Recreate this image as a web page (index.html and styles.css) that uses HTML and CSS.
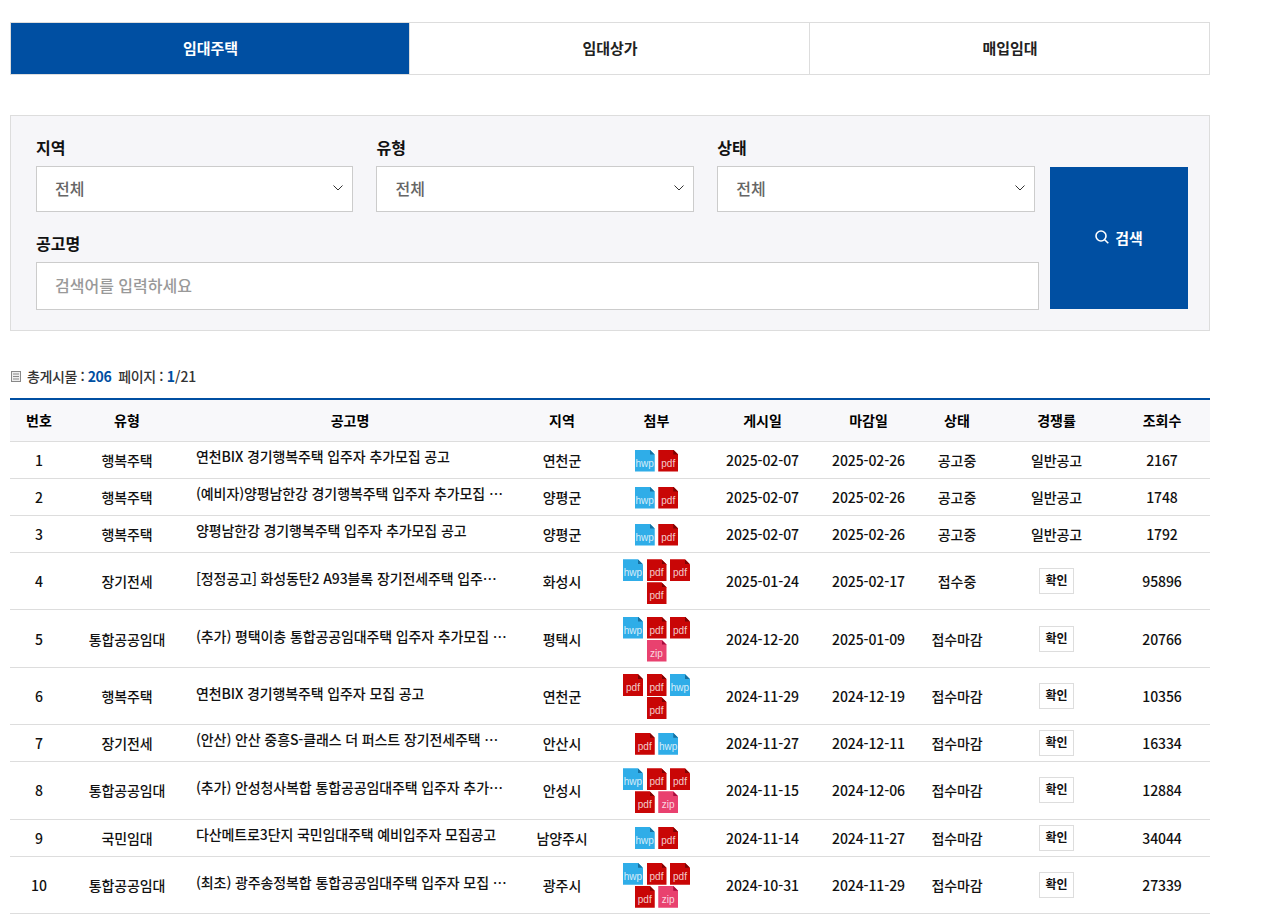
FILE: index.html

```html
<!DOCTYPE html>
<html lang="ko">
<head>
  <meta charset="UTF-8" />
  <title>공고문</title>
  <link rel="stylesheet" href="styles.css">
</head>
<body>
  <div class="wrap">
    <div class="tabs">
      <a class="tab active">임대주택</a>
      <a class="tab">임대상가</a>
      <a class="tab">매입임대</a>
    </div>

    <div class="search">
      <div class="fields">
        <div class="selects">
          <div class="field">
            <label>지역</label>
            <div class="select"><span>전체</span><svg width="10" height="6" viewBox="0 0 10 6"><path d="M.5.5 5 5 9.5.5" fill="none" stroke="#333" stroke-width="1"/></svg></div>
          </div>
          <div class="field">
            <label>유형</label>
            <div class="select"><span>전체</span><svg width="10" height="6" viewBox="0 0 10 6"><path d="M.5.5 5 5 9.5.5" fill="none" stroke="#333" stroke-width="1"/></svg></div>
          </div>
          <div class="field">
            <label>상태</label>
            <div class="select"><span>전체</span><svg width="10" height="6" viewBox="0 0 10 6"><path d="M.5.5 5 5 9.5.5" fill="none" stroke="#333" stroke-width="1"/></svg></div>
          </div>
        </div>
        <div class="field">
          <label>공고명</label>
          <input class="keyword" type="text" placeholder="검색어를 입력하세요">
        </div>
      </div>
      <button class="search-btn">
        <svg width="14" height="14" viewBox="0 0 14 14"><circle cx="6" cy="6" r="5" fill="none" stroke="#fff" stroke-width="1.6"/><path d="M9.7 9.7 13.3 13.3" stroke="#fff" stroke-width="1.6"/></svg>
        검색
      </button>
    </div>

    <div class="summary">
      <svg width="10" height="11" viewBox="0 0 10 11"><rect x=".5" y=".5" width="9" height="10" fill="#eee" stroke="#888"/><path d="M2 3h6M2 5.500h6M2 8h6" stroke="#888"/></svg>
      <span>총게시물 : <b>206</b></span>
      <span>페이지 : <span class="pages"><b>1</b>/21</span></span>
    </div>

    <table class="list">
      <colgroup>
        <col class="c-no"><col class="c-type"><col class="c-title"><col class="c-area"><col class="c-file">
        <col class="c-date"><col class="c-date2"><col class="c-state"><col class="c-rate"><col class="c-view">
      </colgroup>
      <thead>
        <tr><th>번호</th><th>유형</th><th>공고명</th><th>지역</th><th>첨부</th><th>게시일</th><th>마감일</th><th>상태</th><th>경쟁률</th><th>조회수</th></tr>
      </thead>
      <tbody>
        <tr>
          <td>1</td><td>행복주택</td>
          <td class="title"><a>연천BIX 경기행복주택 입주자 추가모집 공고</a></td>
          <td>연천군</td>
          <td><div class="files"><i class="file hwp">hwp</i><i class="file pdf">pdf</i></div></td>
          <td>2025-02-07</td><td>2025-02-26</td><td>공고중</td><td>일반공고</td><td>2167</td>
        </tr>
        <tr>
          <td>2</td><td>행복주택</td>
          <td class="title"><a>(예비자)양평남한강 경기행복주택 입주자 추가모집 …</a></td>
          <td>양평군</td>
          <td><div class="files"><i class="file hwp">hwp</i><i class="file pdf">pdf</i></div></td>
          <td>2025-02-07</td><td>2025-02-26</td><td>공고중</td><td>일반공고</td><td>1748</td>
        </tr>
        <tr>
          <td>3</td><td>행복주택</td>
          <td class="title"><a>양평남한강 경기행복주택 입주자 추가모집 공고</a></td>
          <td>양평군</td>
          <td><div class="files"><i class="file hwp">hwp</i><i class="file pdf">pdf</i></div></td>
          <td>2025-02-07</td><td>2025-02-26</td><td>공고중</td><td>일반공고</td><td>1792</td>
        </tr>
        <tr class="tall">
          <td>4</td><td>장기전세</td>
          <td class="title"><a>[정정공고] 화성동탄2 A93블록 장기전세주택 입주…</a></td>
          <td>화성시</td>
          <td><div class="files"><i class="file hwp">hwp</i><i class="file pdf">pdf</i><i class="file pdf">pdf</i><i class="file pdf">pdf</i></div></td>
          <td>2025-01-24</td><td>2025-02-17</td><td>접수중</td><td><a class="check">확인</a></td><td>95896</td>
        </tr>
        <tr class="tall">
          <td>5</td><td>통합공공임대</td>
          <td class="title"><a>(추가) 평택이충 통합공공임대주택 입주자 추가모집 …</a></td>
          <td>평택시</td>
          <td><div class="files"><i class="file hwp">hwp</i><i class="file pdf">pdf</i><i class="file pdf">pdf</i><i class="file zip">zip</i></div></td>
          <td>2024-12-20</td><td>2025-01-09</td><td>접수마감</td><td><a class="check">확인</a></td><td>20766</td>
        </tr>
        <tr class="tall">
          <td>6</td><td>행복주택</td>
          <td class="title"><a>연천BIX 경기행복주택 입주자 모집 공고</a></td>
          <td>연천군</td>
          <td><div class="files"><i class="file pdf">pdf</i><i class="file pdf">pdf</i><i class="file hwp">hwp</i><i class="file pdf">pdf</i></div></td>
          <td>2024-11-29</td><td>2024-12-19</td><td>접수마감</td><td><a class="check">확인</a></td><td>10356</td>
        </tr>
        <tr>
          <td>7</td><td>장기전세</td>
          <td class="title"><a>(안산) 안산 중흥S-클래스 더 퍼스트 장기전세주택 …</a></td>
          <td>안산시</td>
          <td><div class="files"><i class="file pdf">pdf</i><i class="file hwp">hwp</i></div></td>
          <td>2024-11-27</td><td>2024-12-11</td><td>접수마감</td><td><a class="check">확인</a></td><td>16334</td>
        </tr>
        <tr class="tall">
          <td>8</td><td>통합공공임대</td>
          <td class="title"><a>(추가) 안성청사복합 통합공공임대주택 입주자 추가…</a></td>
          <td>안성시</td>
          <td><div class="files"><i class="file hwp">hwp</i><i class="file pdf">pdf</i><i class="file pdf">pdf</i><i class="file pdf">pdf</i><i class="file zip">zip</i></div></td>
          <td>2024-11-15</td><td>2024-12-06</td><td>접수마감</td><td><a class="check">확인</a></td><td>12884</td>
        </tr>
        <tr>
          <td>9</td><td>국민임대</td>
          <td class="title"><a>다산메트로3단지 국민임대주택 예비입주자 모집공고</a></td>
          <td>남양주시</td>
          <td><div class="files"><i class="file hwp">hwp</i><i class="file pdf">pdf</i></div></td>
          <td>2024-11-14</td><td>2024-11-27</td><td>접수마감</td><td><a class="check">확인</a></td><td>34044</td>
        </tr>
        <tr class="tall">
          <td>10</td><td>통합공공임대</td>
          <td class="title"><a>(최초) 광주송정복합 통합공공임대주택 입주자 모집 …</a></td>
          <td>광주시</td>
          <td><div class="files"><i class="file hwp">hwp</i><i class="file pdf">pdf</i><i class="file pdf">pdf</i><i class="file pdf">pdf</i><i class="file zip">zip</i></div></td>
          <td>2024-10-31</td><td>2024-11-29</td><td>접수마감</td><td><a class="check">확인</a></td><td>27339</td>
        </tr>
      </tbody>
    </table>
  </div>
</body>
</html>
```

FILE: styles.css

```css
* {
  box-sizing: border-box;
}
body {
  margin: 0;
  background-color: #fff;
  font-family: "Noto Sans CJK KR", "Noto Sans", sans-serif;
  font-size: 14px;
  color: #000;
}
.wrap {
  width: 1200px;
  margin-left: 10px;
  padding-top: 22px;
}

/* tabs */
.tabs {
  display: flex;
  height: 53px;
  border: 1px solid #ddd;
}
.tab {
  flex: 1;
  display: flex;
  align-items: center;
  justify-content: center;
  padding: 0 0 2px 1px;
  font-size: 15px;
  font-weight: 700;
  color: #222;
  border-left: 1px solid #ddd;
}
.tab:first-child {
  flex: 0 0 398px;
  border-left: none;
}
.tab.active {
  background-color: #004fa2;
  color: #fff;
}

/* search box */
.search {
  display: flex;
  align-items: flex-end;
  gap: 11px;
  height: 216px;
  margin-top: 40px;
  padding: 18px 21px 20px 25px;
  background-color: #f6f6f9;
  border: 1px solid #ddd;
}
.fields {
  flex: 1;
  display: flex;
  flex-direction: column;
  gap: 19px;
}
.selects {
  display: flex;
  gap: 23px;
  padding-right: 4px;
}
.selects .field {
  flex: 1;
}
.selects .field:first-child {
  flex: 0 0 317.45px;
}
.field label {
  display: block;
  height: 24px;
  margin-bottom: 7px;
  font-size: 16px;
  font-weight: 700;
  line-height: 24px;
  color: #111;
}
.select {
  display: flex;
  align-items: center;
  justify-content: space-between;
  height: 46px;
  padding: 0 9px 2px 18px;
  background-color: #fff;
  border: 1px solid #ccc;
  font-size: 16px;
  font-weight: 500;
  color: #666;
}
.keyword {
  display: block;
  width: 100%;
  height: 48px;
  padding: 0 18px 2px;
  background-color: #fff;
  border: 1px solid #ccc;
  border-radius: 0;
  font-family: inherit;
  font-size: 16px;
  font-weight: 500;
}
.keyword::placeholder {
  color: #999;
}
.search-btn {
  display: flex;
  align-items: center;
  justify-content: center;
  gap: 6px;
  width: 138px;
  height: 142px;
  margin-bottom: 1px;
  padding: 0 0 2px;
  background-color: #004fa2;
  border: none;
  font-family: inherit;
  font-size: 15px;
  font-weight: 700;
  color: #fff;
}

/* summary line */
.summary {
  display: flex;
  align-items: center;
  gap: 6px;
  height: 20px;
  margin-top: 35px;
  padding-left: 1px;
  font-size: 14px;
  font-weight: 500;
  letter-spacing: -0.4px;
  color: #333;
}
.summary span + span {
  margin-left: 1px;
}
.summary b {
  color: #004fa2;
}
.summary .pages {
  letter-spacing: 0;
}

/* list table */
.list {
  width: 100%;
  margin-top: 12px;
  table-layout: fixed;
  border-collapse: separate;
  border-spacing: 0;
  border-top: 2px solid #004fa2;
}
.c-no { width: 58px; }
.c-type { width: 118px; }
.c-title { width: 328px; }
.c-area { width: 96px; }
.c-file { width: 93px; }
.c-date { width: 119px; }
.c-date2 { width: 93px; }
.c-state { width: 84px; }
.c-rate { width: 115px; }
.c-view { width: 96px; }
.list th {
  height: 42px;
  padding-bottom: 2px;
  background-color: #f8f8fa;
  border-bottom: 1px solid #ddd;
  font-size: 14px;
  font-weight: 700;
  text-align: center;
}
.list td {
  height: 37px;
  padding: 0;
  border-bottom: 1px solid #ddd;
  font-weight: 500;
  letter-spacing: -0.1px;
  text-align: center;
  color: #111;
}
.list tr.tall td {
  height: 57.4px;
}
.list td.title {
  padding: 0 10px 8px;
  letter-spacing: -0.12px;
  text-align: left;
}
.list tr.tall td.title {
  padding-bottom: 6px;
}
.title a {
  display: block;
  white-space: nowrap;
}

/* attachment icons */
.files {
  display: flex;
  flex-wrap: wrap;
  justify-content: center;
  gap: 1px 3.5px;
  width: 68px;
  margin: 1px auto 0;
}
.file {
  position: relative;
  display: block;
  width: 20px;
  height: 22px;
  padding-top: 6px;
  clip-path: polygon(0 0, 15px 0, 100% 5px, 100% 100%, 0 100%);
  font-family: "Liberation Sans", sans-serif;
  font-size: 10px;
  font-style: normal;
  font-weight: 400;
  letter-spacing: 0;
  line-height: 15px;
  text-align: center;
  color: rgba(255, 255, 255, 0.8);
}
.file::before {
  content: "";
  position: absolute;
  top: 0;
  right: 0;
  width: 5px;
  height: 5px;
  clip-path: polygon(0 0, 100% 100%, 0 100%);
}
.hwp { background-color: #2fade8; }
.hwp::before { background-color: #17709f; }
.pdf { background-color: #c90606; }
.pdf::before { background-color: #7e0303; }
.zip { background-color: #e9416f; }
.zip::before { background-color: #a80d3e; }

.check {
  display: inline-block;
  width: 35px;
  height: 26px;
  background-color: #fff;
  border: 1px solid #ddd;
  font-size: 12px;
  font-weight: 700;
  line-height: 22px;
}
```
